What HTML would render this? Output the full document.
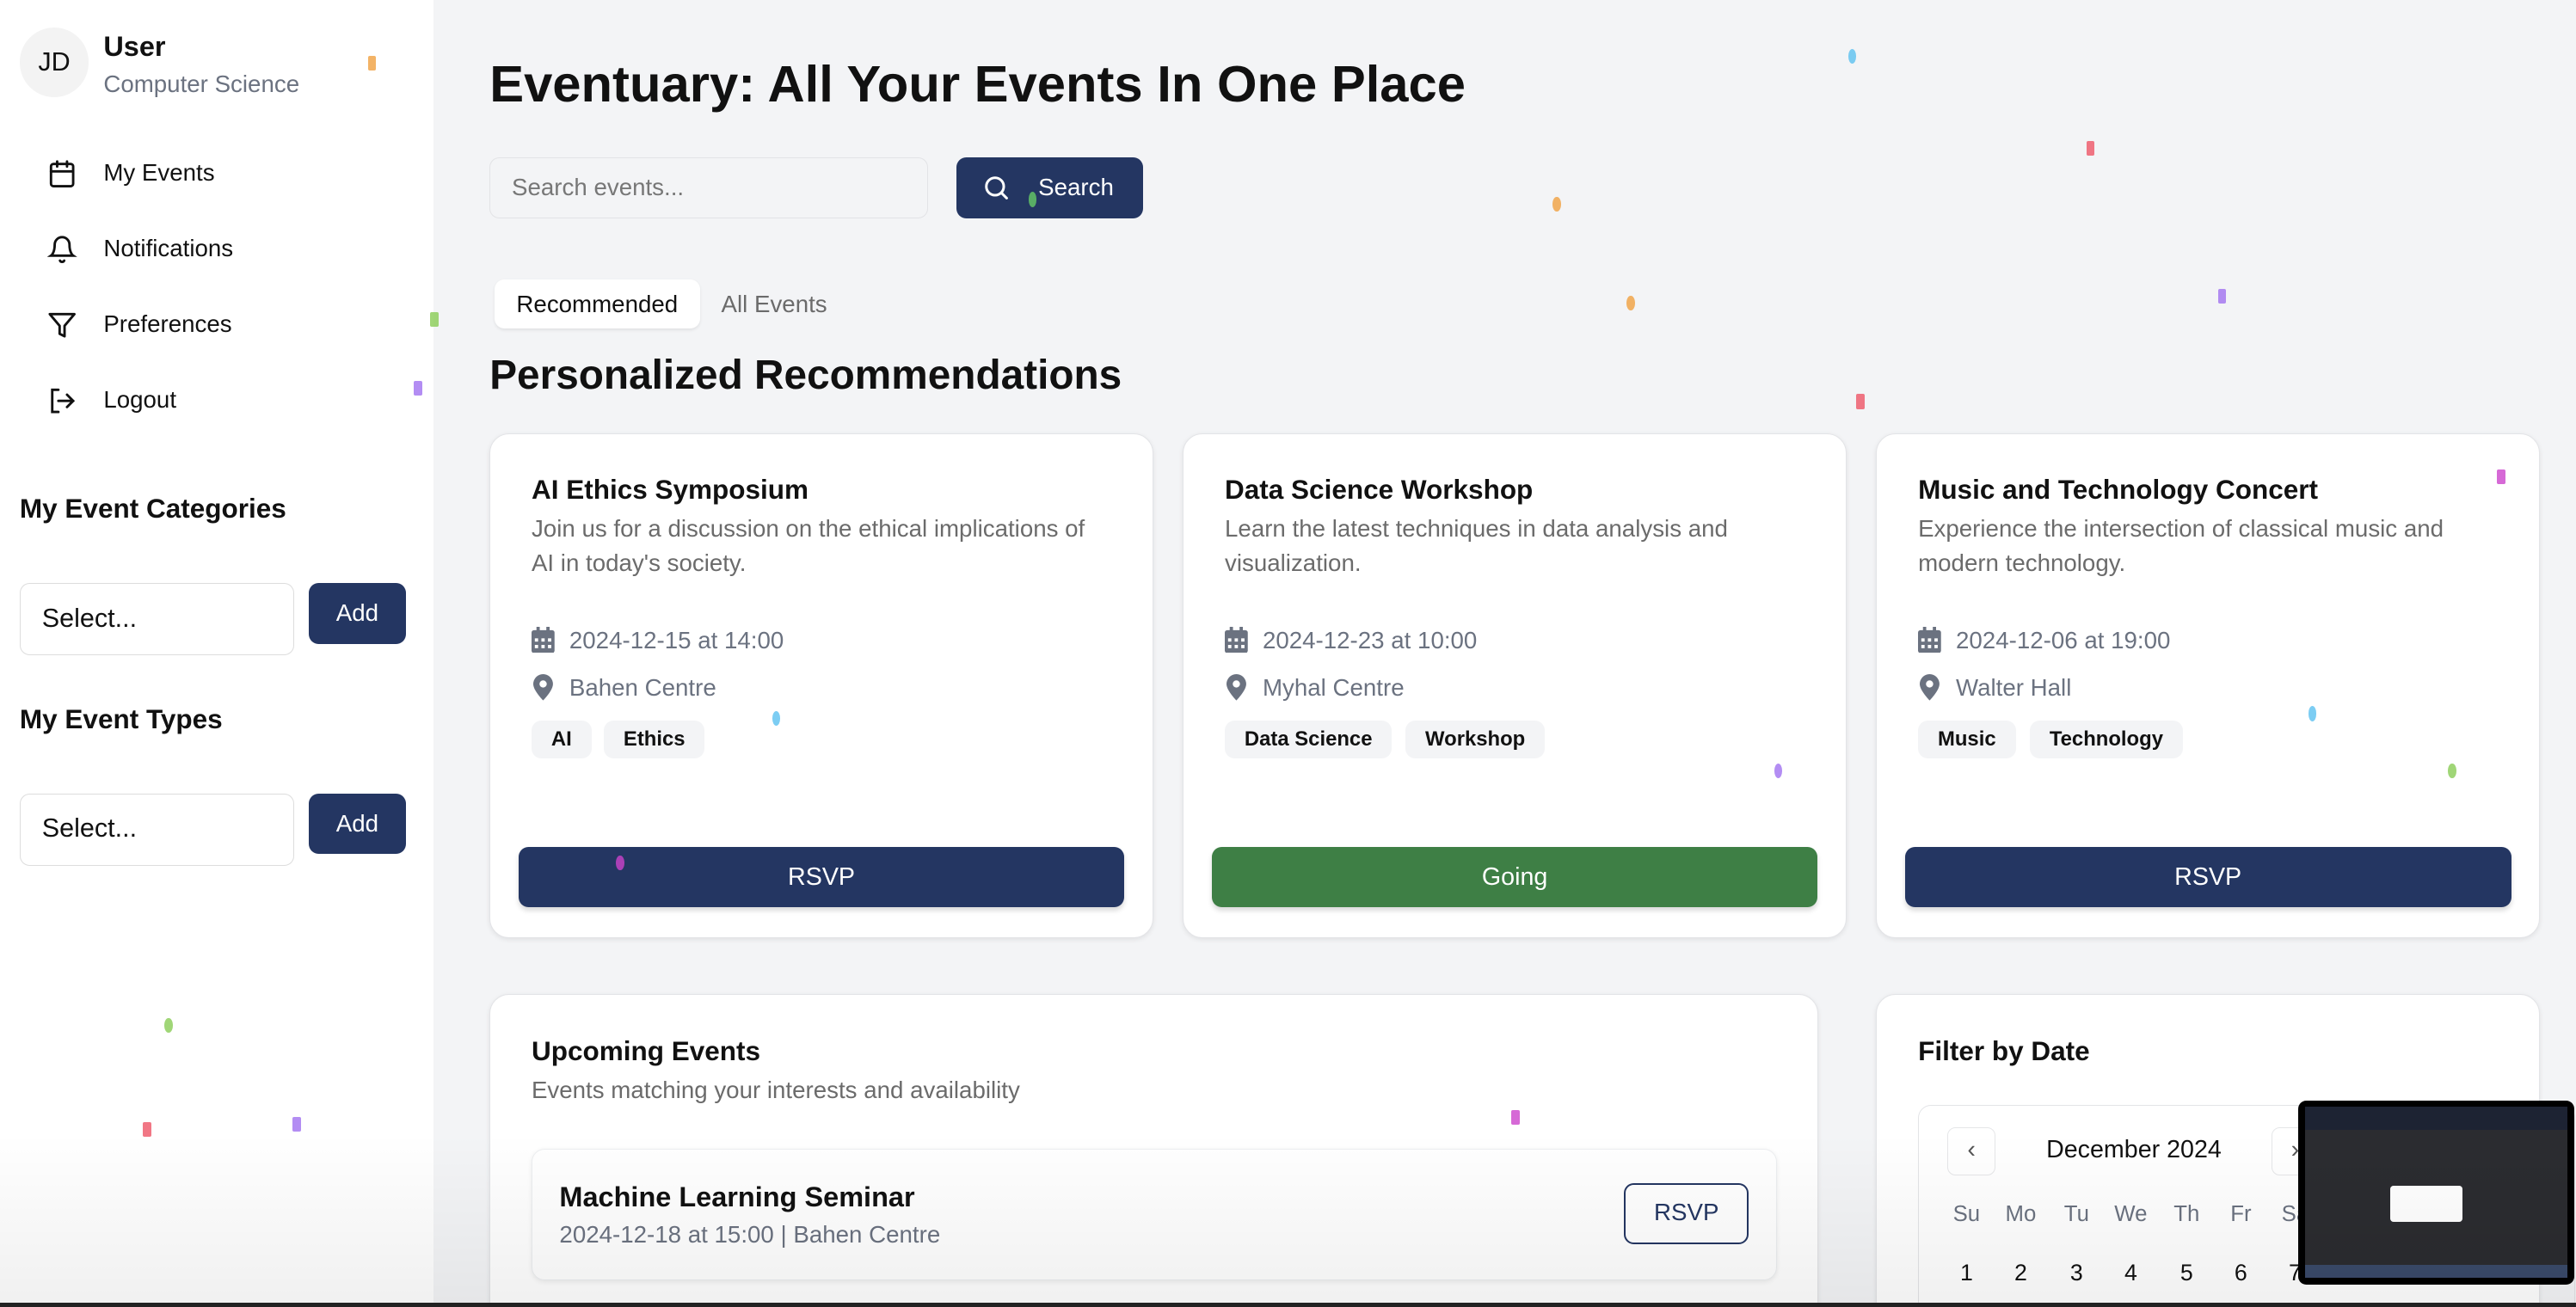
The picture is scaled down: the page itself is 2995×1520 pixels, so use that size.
<!DOCTYPE html>
<html><head><meta charset="utf-8"><style>
*{box-sizing:border-box;margin:0;padding:0}
html,body{width:2995px;height:1520px;overflow:hidden;background:#f3f4f6}
#r{width:1568px;height:796px;position:relative;zoom:1.9101;font-family:"Liberation Sans",sans-serif;color:#111;background:#f3f4f6;overflow:hidden}
.a{position:absolute;white-space:nowrap}
.side{left:0;top:0;width:264px;height:796px;background:#fff}
.nav{font-size:14.5px;color:#111}
.card{position:absolute;background:#fff;border:1px solid #e3e4e7;border-radius:12px;box-shadow:0 1px 3px rgba(0,0,0,.08)}
.t{font-weight:bold;font-size:16.5px}
.d{font-size:14.5px;color:#6b6b6b;line-height:21px}
.m{font-size:14.5px;color:#6b7280}
.tag{position:absolute;top:174px;height:23px;background:#f3f4f6;border-radius:6px;font-size:12.5px;font-weight:bold;padding:0 12px;line-height:23px}
.btn{position:absolute;left:17px;right:17px;top:251px;height:37px;border-radius:6px;background:#243662;color:#fff;font-size:15px;text-align:center;line-height:37px;box-shadow:0 2px 3px rgba(0,0,0,.15)}
.sel{position:absolute;left:12px;width:167px;height:44px;border:1px solid #ddd;border-radius:6px;font-size:16px;padding:12px 13px}
.add{position:absolute;left:188px;width:59px;height:37px;background:#243662;color:#fff;border-radius:6px;font-size:14.5px;text-align:center;line-height:37px}
.wd{position:absolute;top:732px;font-size:13.5px;color:#6b7280;width:30px;text-align:center}
.dn{position:absolute;top:767px;font-size:14px;width:30px;text-align:center}
.c{position:absolute;width:5px;height:9px;border-radius:1px;opacity:.8}
</style></head><body><div id="r">
<div class="a side"></div>
<div class="a" style="left:12px;top:17px;width:42px;height:42px;border-radius:50%;background:#f3f3f3;font-size:16px;text-align:center;line-height:42px">JD</div>
<div class="a" style="left:63px;top:19px;font-size:17px;font-weight:bold">User</div>
<div class="a" style="left:63px;top:43px;font-size:14.5px;color:#6b7280">Computer Science</div>
<svg class="a" style="left:29px;top:97px" width="18" height="18" viewBox="0 0 24 24" fill="none" stroke="#111" stroke-width="2" stroke-linecap="round"><rect x="3" y="4" width="18" height="18" rx="2"/><path d="M16 2v4M8 2v4M3 10h18"/></svg>
<div class="a nav" style="left:63px;top:97px">My Events</div>
<svg class="a" style="left:29px;top:143px" width="18" height="18" viewBox="0 0 24 24" fill="none" stroke="#111" stroke-width="2" stroke-linecap="round"><path d="M6 8a6 6 0 0 1 12 0c0 7 3 9 3 9H3s3-2 3-9M10.3 21a1.9 1.9 0 0 0 3.4 0"/></svg>
<div class="a nav" style="left:63px;top:143px">Notifications</div>
<svg class="a" style="left:29px;top:189px" width="18" height="18" viewBox="0 0 24 24" fill="none" stroke="#111" stroke-width="2" stroke-linejoin="round"><path d="M22 3H2l8 9.5V19l4 2v-8.5z"/></svg>
<div class="a nav" style="left:63px;top:189px">Preferences</div>
<svg class="a" style="left:29px;top:235px" width="18" height="18" viewBox="0 0 24 24" fill="none" stroke="#111" stroke-width="2" stroke-linecap="round"><path d="M9 21H4V3h5M16 17l5-5-5-5M21 12H9"/></svg>
<div class="a nav" style="left:63px;top:235px">Logout</div>
<div class="a" style="left:12px;top:300px;font-size:16.5px;font-weight:bold">My Event Categories</div>
<div class="sel" style="top:355px">Select...</div><div class="add" style="top:355px">Add</div>
<div class="a" style="left:12px;top:428px;font-size:16.5px;font-weight:bold">My Event Types</div>
<div class="sel" style="top:483px">Select...</div><div class="add" style="top:483px">Add</div>

<div class="a" style="left:298px;top:33px;font-size:31.3px;font-weight:bold">Eventuary: All Your Events In One Place</div>
<div class="a" style="left:298px;top:96px;width:267px;height:37px;border:1px solid #e2e3e6;border-radius:6px;font-size:14.5px;color:#777;padding:9px 13px">Search events...</div>
<div class="a" style="left:582px;top:96px;width:114px;height:37px;border-radius:6px;background:#243662;color:#fff;font-size:14.5px;line-height:37px;padding-left:50px">Search</div>
<svg class="a" style="left:598px;top:106px" width="17" height="17" viewBox="0 0 24 24" fill="none" stroke="#fff" stroke-width="2.2" stroke-linecap="round"><circle cx="11" cy="11" r="7.5"/><path d="M21 21l-4.5-4.5"/></svg>
<div class="a" style="left:301px;top:170px;width:125px;height:30px;background:#fff;border-radius:6px;font-size:14.5px;text-align:center;line-height:30px;box-shadow:0 1px 2px rgba(0,0,0,.08)">Recommended</div>
<div class="a" style="left:439px;top:177px;font-size:14.5px;color:#6b6b6b">All Events</div>
<div class="a" style="left:298px;top:214px;font-size:25px;font-weight:bold">Personalized Recommendations</div>

<div class="card" style="left:298px;top:264px;width:404px;height:307px">
<div class="a t" style="left:25px;top:24px">AI Ethics Symposium</div>
<div class="a d" style="left:25px;top:47px">Join us for a discussion on the ethical implications of<br>AI in today's society.</div>
<svg class="a" style="left:25px;top:117px" width="14" height="16" viewBox="0 0 14 16"><rect x="0" y="2" width="14" height="14" rx="1.5" fill="#6b7280"/><rect x="3" y="0" width="2" height="3" fill="#6b7280"/><rect x="9" y="0" width="2" height="3" fill="#6b7280"/><g fill="#fff"><rect x="2" y="7" width="2" height="2"/><rect x="6" y="7" width="2" height="2"/><rect x="10" y="7" width="2" height="2"/><rect x="2" y="11" width="2" height="2"/><rect x="6" y="11" width="2" height="2"/><rect x="10" y="11" width="2" height="2"/></g></svg>
<div class="a m" style="left:48px;top:117px">2024-12-15 at 14:00</div>
<svg class="a" style="left:26px;top:146px" width="12" height="16" viewBox="0 0 12 16"><path d="M6 0a6 6 0 0 1 6 6c0 4-6 10-6 10S0 10 0 6a6 6 0 0 1 6-6z" fill="#6b7280"/><circle cx="6" cy="6" r="2.2" fill="#fff"/></svg>
<div class="a m" style="left:48px;top:146px">Bahen Centre</div>
<div class="tag" style="left:25px">AI</div><div class="tag" style="left:69px">Ethics</div>
<div class="btn">RSVP</div></div>

<div class="card" style="left:720px;top:264px;width:404px;height:307px">
<div class="a t" style="left:25px;top:24px">Data Science Workshop</div>
<div class="a d" style="left:25px;top:47px">Learn the latest techniques in data analysis and<br>visualization.</div>
<svg class="a" style="left:25px;top:117px" width="14" height="16" viewBox="0 0 14 16"><rect x="0" y="2" width="14" height="14" rx="1.5" fill="#6b7280"/><rect x="3" y="0" width="2" height="3" fill="#6b7280"/><rect x="9" y="0" width="2" height="3" fill="#6b7280"/><g fill="#fff"><rect x="2" y="7" width="2" height="2"/><rect x="6" y="7" width="2" height="2"/><rect x="10" y="7" width="2" height="2"/><rect x="2" y="11" width="2" height="2"/><rect x="6" y="11" width="2" height="2"/><rect x="10" y="11" width="2" height="2"/></g></svg>
<div class="a m" style="left:48px;top:117px">2024-12-23 at 10:00</div>
<svg class="a" style="left:26px;top:146px" width="12" height="16" viewBox="0 0 12 16"><path d="M6 0a6 6 0 0 1 6 6c0 4-6 10-6 10S0 10 0 6a6 6 0 0 1 6-6z" fill="#6b7280"/><circle cx="6" cy="6" r="2.2" fill="#fff"/></svg>
<div class="a m" style="left:48px;top:146px">Myhal Centre</div>
<div class="tag" style="left:25px">Data Science</div><div class="tag" style="left:135px">Workshop</div>
<div class="btn" style="background:#3e7f45">Going</div></div>

<div class="card" style="left:1142px;top:264px;width:404px;height:307px">
<div class="a t" style="left:25px;top:24px">Music and Technology Concert</div>
<div class="a d" style="left:25px;top:47px">Experience the intersection of classical music and<br>modern technology.</div>
<svg class="a" style="left:25px;top:117px" width="14" height="16" viewBox="0 0 14 16"><rect x="0" y="2" width="14" height="14" rx="1.5" fill="#6b7280"/><rect x="3" y="0" width="2" height="3" fill="#6b7280"/><rect x="9" y="0" width="2" height="3" fill="#6b7280"/><g fill="#fff"><rect x="2" y="7" width="2" height="2"/><rect x="6" y="7" width="2" height="2"/><rect x="10" y="7" width="2" height="2"/><rect x="2" y="11" width="2" height="2"/><rect x="6" y="11" width="2" height="2"/><rect x="10" y="11" width="2" height="2"/></g></svg>
<div class="a m" style="left:48px;top:117px">2024-12-06 at 19:00</div>
<svg class="a" style="left:26px;top:146px" width="12" height="16" viewBox="0 0 12 16"><path d="M6 0a6 6 0 0 1 6 6c0 4-6 10-6 10S0 10 0 6a6 6 0 0 1 6-6z" fill="#6b7280"/><circle cx="6" cy="6" r="2.2" fill="#fff"/></svg>
<div class="a m" style="left:48px;top:146px">Walter Hall</div>
<div class="tag" style="left:25px">Music</div><div class="tag" style="left:93px">Technology</div>
<div class="btn">RSVP</div></div>

<div class="card" style="left:298px;top:605px;width:809px;height:220px">
<div class="a t" style="left:25px;top:25px">Upcoming Events</div>
<div class="a d" style="left:25px;top:48px">Events matching your interests and availability</div>
<div class="a" style="left:25px;top:94px;width:758px;height:80px;border:1px solid #eceef0;border-radius:8px;box-shadow:0 1px 3px rgba(0,0,0,.08)"></div>
<div class="a" style="left:42px;top:114px;font-size:17px;font-weight:bold">Machine Learning Seminar</div>
<div class="a m" style="left:42px;top:138px">2024-12-18 at 15:00 | Bahen Centre</div>
<div class="a" style="left:690px;top:115px;width:76px;height:37px;border:1.5px solid #243662;border-radius:6px;color:#243662;font-size:14.5px;text-align:center;line-height:34px">RSVP</div>
</div>

<div class="card" style="left:1142px;top:605px;width:404px;height:220px">
<div class="a t" style="left:25px;top:25px">Filter by Date</div>
<div class="a" style="left:25px;top:67px;width:400px;height:160px;border:1px solid #e3e4e7;border-radius:8px"></div>
<div class="a" style="left:43px;top:81px;width:29px;height:29px;border:1px solid #e5e6e8;border-radius:5px;text-align:center;line-height:27px;color:#555;font-size:15px">&#8249;</div>
<div class="a" style="left:103px;top:86px;font-size:15px">December 2024</div>
<div class="a" style="left:240px;top:81px;width:29px;height:29px;border:1px solid #e5e6e8;border-radius:5px;text-align:center;line-height:27px;color:#555;font-size:15px">&#8250;</div>
</div>
<div class="wd" style="left:1182px">Su</div><div class="wd" style="left:1215px">Mo</div><div class="wd" style="left:1249px">Tu</div><div class="wd" style="left:1282px">We</div><div class="wd" style="left:1316px">Th</div><div class="wd" style="left:1349px">Fr</div><div class="wd" style="left:1382px">Sa</div>
<div class="dn" style="left:1182px">1</div><div class="dn" style="left:1215px">2</div><div class="dn" style="left:1249px">3</div><div class="dn" style="left:1282px">4</div><div class="dn" style="left:1316px">5</div><div class="dn" style="left:1349px">6</div><div class="dn" style="left:1382px">7</div>

<div class="a" style="left:1399px;top:670px;width:168px;height:112px;background:#000;border-radius:5px;padding:4px"><div style="width:100%;height:100%;background:#2b2c30;position:relative"><div style="position:absolute;left:0;top:0;right:0;height:14px;background:#1d2333"></div><div style="position:absolute;left:52px;top:48px;width:44px;height:22px;background:#fff;border-radius:2px"></div><div style="position:absolute;left:0;bottom:0;right:0;height:8px;background:#3a4a6a"></div></div></div>

<div class="a" style="left:0;top:690px;width:1568px;height:106px;background:linear-gradient(rgba(0,0,0,0),rgba(0,0,0,.06));pointer-events:none"></div>
<div class="a" style="left:0;top:793px;width:1568px;height:3px;background:#222"></div>

<div class="c" style="left:224px;top:34px;background:#f0a040"></div>
<div class="c" style="left:262px;top:190px;background:#8c5"></div>
<div class="c" style="left:252px;top:232px;background:#a070f0"></div>
<div class="c" style="left:1125px;top:30px;background:#5bc0f0;border-radius:50%"></div>
<div class="c" style="left:945px;top:120px;background:#f0a040;border-radius:50%"></div>
<div class="c" style="left:626px;top:117px;background:#6c6;border-radius:50%"></div>
<div class="c" style="left:990px;top:180px;background:#f0a040;border-radius:50%"></div>
<div class="c" style="left:1350px;top:176px;background:#a070f0"></div>
<div class="c" style="left:1130px;top:240px;background:#e56"></div>
<div class="c" style="left:375px;top:521px;background:#c4c;border-radius:50%"></div>
<div class="c" style="left:470px;top:433px;background:#5bc0f0;border-radius:50%"></div>
<div class="c" style="left:1080px;top:465px;background:#a070f0;border-radius:50%"></div>
<div class="c" style="left:1405px;top:430px;background:#5bc0f0;border-radius:50%"></div>
<div class="c" style="left:1490px;top:465px;background:#8c5;border-radius:50%"></div>
<div class="c" style="left:100px;top:620px;background:#8c5;border-radius:50%"></div>
<div class="c" style="left:178px;top:680px;background:#a070f0"></div>
<div class="c" style="left:87px;top:683px;background:#e56"></div>
<div class="c" style="left:920px;top:676px;background:#c4c"></div>
<div class="c" style="left:1270px;top:86px;background:#e56"></div>
<div class="c" style="left:1520px;top:286px;background:#c4c"></div>
</div></body></html>
